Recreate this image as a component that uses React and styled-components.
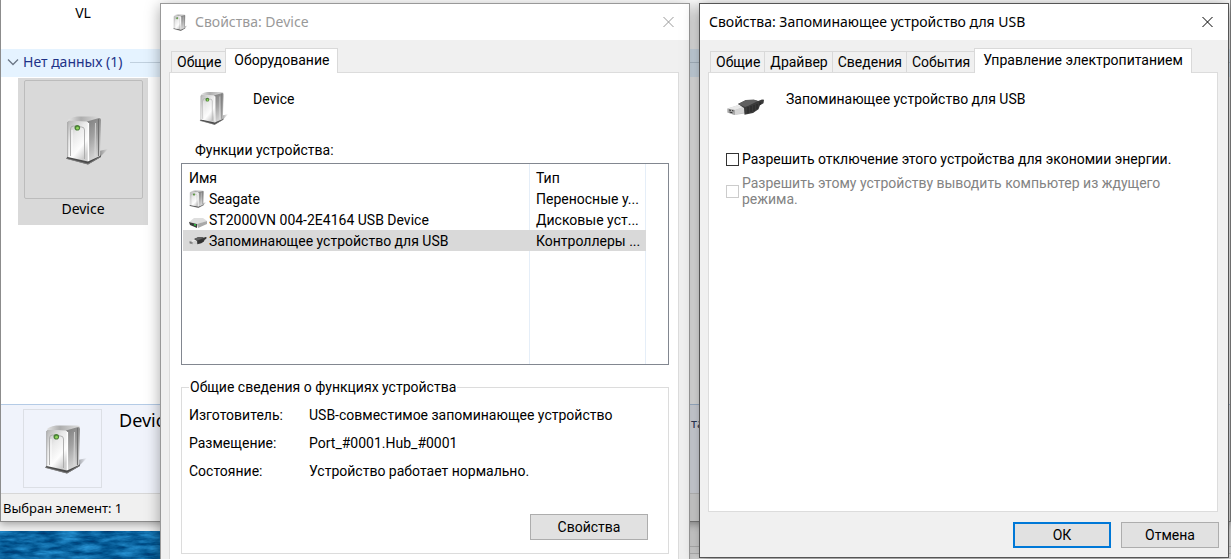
import styled, { createGlobalStyle } from 'styled-components';

const GlobalStyle = createGlobalStyle`
  *, *::before, *::after {
    box-sizing: border-box;
  }

  body {
    margin: 0;
    color: #000;
    font-family: Roboto, 'Liberation Sans', sans-serif;
    font-size: 14px;
    line-height: 16px;
  }

  button, input {
    font: inherit;
    margin: 0;
  }
`;

const Desktop = styled.main`
  position: relative;
  height: 100vh;
  overflow: hidden;
  background-color: #f0f0f0;
`;

const Wallpaper = styled.svg`
  position: absolute;
  left: 0;
  bottom: 0;
  width: 100%;
  height: 28px;
`;

const BackWindow = styled.div`
  position: absolute;
  left: 690px;
  right: 0;
  bottom: 0;
  height: 38px;
  background-color: #f0f0f0;

  &::after {
    content: '';
    display: block;
    height: 8px;
    margin-top: 25px;
    border: 1px solid #ccc;
    border-width: 1px 0;
  }
`;

const Explorer = styled.section`
  position: absolute;
  top: 0;
  right: 0;
  bottom: 37px;
  left: 0;
  display: flex;
  flex-direction: column;
  background-color: #fff;
  border: 1px solid #8c8c8c;
  border-top: 0;
  box-shadow: 0 2px 8px rgba(0, 0, 0, 0.35);
  font-family: 'Noto Sans', 'Open Sans', sans-serif;
  line-height: 20px;
`;

const PreviousItem = styled.div`
  width: 130px;
  height: 49px;
  margin-left: 17px;
  padding-top: 3px;
  text-align: center;
`;

const GroupHeader = styled.h2`
  display: flex;
  align-items: center;
  gap: 4px;
  height: 28px;
  margin: 0;
  padding: 0 0 2px 6px;
  background-color: #e5f3ff;
  color: #1e3287;
  font-size: 14px;
  font-weight: 400;

  &::after {
    content: '';
    flex: 1;
    height: 1px;
    margin-left: 4px;
    background-color: #c0d0de;
  }
`;

const FileItem = styled.div`
  display: flex;
  flex-direction: column;
  align-items: center;
  width: 130px;
  height: 147px;
  margin: 1px 0 0 17px;
  padding-top: 2px;
  background-color: #d9d9d9;
`;

const Thumbnail = styled.div`
  display: flex;
  align-items: center;
  justify-content: center;
  width: ${({ size }) => size}px;
  height: ${({ size }) => size}px;
  padding-left: 7px;
  border: 1px solid ${({ edge }) => edge};
  border-radius: ${({ round }) => (round ? '2px' : '0')};
`;

const DetailsPane = styled.div`
  display: flex;
  gap: 17px;
  height: 89px;
  margin-top: auto;
  padding: 4px 0 0 22px;
  background-color: #f0f3fb;
  border-top: 1px solid #b4cbe6;
`;

const DetailsName = styled.span`
  width: 570px;
  margin-top: 1px;
  font-size: 18px;
`;

const DetailsField = styled.span`
  margin-top: 4px;
  margin-left: -15px;
  color: #32415f;
  font-size: 13px;
`;

const StatusBar = styled.footer`
  height: 28px;
  padding: 4px 2px;
  background-color: #f0f0f0;
  border-top: 1px solid #d7d7d7;
  font-size: 13px;
`;

const Dialog = styled.section`
  position: absolute;
  top: 3px;
  display: flex;
  flex-direction: column;
  background-color: #f0f0f0;
  border: 1px solid ${({ active }) => (active ? '#555' : '#999')};
  box-shadow: 0 3px 14px rgba(0, 0, 0, ${({ active }) => (active ? 0.5 : 0.35)});
`;

const DeviceDialog = styled(Dialog)`
  left: 160px;
  width: 530px;
  height: 590px;
`;

const UsbDialog = styled(Dialog)`
  right: 2px;
  bottom: 1px;
  left: 699px;
  padding-bottom: 9px;
`;

const TitleBar = styled.header`
  display: flex;
  align-items: center;
  gap: 7px;
  height: 36px;
  padding: 0 13px 0 ${({ inset }) => inset}px;
  background-color: #fff;
  color: ${({ active }) => (active ? '#000' : '#999')};
  font-family: 'Noto Sans', 'Open Sans', sans-serif;
`;

const Title = styled.h1`
  flex: 1;
  margin: 0;
  font-size: 14px;
  font-weight: 400;
  line-height: 20px;
`;

const CloseButton = styled.button`
  display: flex;
  padding: 1px;
  border: 0;
  background: none;
  color: inherit;
`;

const TabList = styled.div`
  display: flex;
  align-items: flex-end;
  height: 32px;
  padding: 0 10px;
`;

const Tab = styled.button`
  position: relative;
  height: 21px;
  padding: 0 4px 0 5px;
  border: 1px solid #d9d9d9;
  border-bottom: 0;
  background-color: #f0f0f0;
  color: #000;
  white-space: nowrap;

  & + & {
    border-left-width: 0;
  }

  &:has(+ [aria-selected='true']) {
    border-right: 0;
  }

  &&[aria-selected='true'] {
    z-index: 1;
    height: 25px;
    margin-bottom: -1px;
    padding: 0 8px 2px;
    border-left-width: 1px;
    background-color: #fff;
  }
`;

const TabPanel = styled.div`
  flex: 1;
  margin: 0 10px ${({ gap }) => gap}px 8px;
  padding: 0 9px 9px 11px;
  border: 1px solid #dcdcdc;
  background-color: #fff;
`;

const Heading = styled.div`
  display: flex;
  gap: ${({ gap }) => gap}px;
  height: 52px;
  padding: 18px 0 0 ${({ inset }) => inset}px;
`;

const ListLabel = styled.div`
  margin: 17px 0 5px 14px;
`;

const ListBox = styled.div`
  display: grid;
  height: 202px;
  padding: 1px;
  border: 1px solid #828790;
  background:
    linear-gradient(#e5eef8, #e5eef8) 347px 0 / 1px 100% no-repeat,
    linear-gradient(#e5eef8, #e5eef8) 463px 0 / 1px 100% no-repeat;
`;

const Table = styled.table`
  width: 463px;
  align-self: start;
  border-collapse: collapse;
  table-layout: fixed;
`;

const HeadCell = styled.th`
  width: ${({ width }) => width};
  height: 23px;
  padding: 2px 6px 0;
  text-align: left;
  font-weight: 400;
`;

const Row = styled.tr`
  background-color: ${({ selected }) => (selected ? '#d9d9d9' : 'transparent')};
`;

const Cell = styled.td`
  height: 21px;
  padding: 0 0 0 6px;
  white-space: nowrap;
`;

const NameCell = styled.div`
  display: flex;
  align-items: center;
  gap: 2px;
`;

const Summary = styled.fieldset`
  height: 175px;
  margin: 14px 0 0;
  padding: 12px 20px 0 7px;
  border: 1px solid #dcdcdc;
`;

const Legend = styled.legend`
  padding: 0 1px;
`;

const Facts = styled.dl`
  display: grid;
  grid-template-columns: 120px 1fr;
  row-gap: 12px;
  margin: 0 0 35px;
`;

const Term = styled.dt``;

const Fact = styled.dd`
  margin: 0;
`;

const ButtonRow = styled.div`
  display: flex;
  justify-content: flex-end;
  gap: 10px;
  padding-right: ${({ inset }) => inset}px;
`;

const Button = styled.button`
  width: ${({ wide }) => (wide ? 118 : 98)}px;
  height: 26px;
  padding: 0;
  border: ${({ primary }) => (primary ? '2px solid #0078d7' : '1px solid #adadad')};
  background-color: #e1e1e1;
  color: #000;
`;

const Option = styled.label`
  display: flex;
  align-items: center;
  gap: 3px;
  width: 450px;
  margin: ${({ top }) => top}px 0 0 6px;
  color: ${({ disabled }) => (disabled ? '#838383' : '#000')};
`;

const CheckBox = styled.input`
  flex: none;
  width: 13px;
  height: 13px;
  appearance: none;
  border: 1px solid #333;
  background-color: #fff;

  &:disabled {
    border-color: #ccc;
  }
`;

const Icon = styled.svg`
  display: block;
  flex: none;
`;

const CloseIcon = () => (
  <Icon width='13' height='13' viewBox='0 0 13 13' fill='none' stroke='currentColor'>
    <path d='M1.5 1l10 10M11.5 1l-10 10' />
  </Icon>
);

const ChevronIcon = () => (
  <Icon width='12' height='12' viewBox='0 0 12 12' fill='none' stroke='#6b7686'>
    <path d='M1 3.5l5 5 5-5' strokeWidth='1.3' />
  </Icon>
);

// Upright enclosure with a lit power button
const DriveIcon = ({ width, height, id }) => (
  <Icon width={width} height={height} viewBox='0 0 44 50' preserveAspectRatio='none'>
    <defs>
      <linearGradient id={`${id}-front`} x1='0' y1='0' x2='0.6' y2='1'>
        <stop offset='0' stopColor='#b4b4b4' />
        <stop offset='0.4' stopColor='#e9e9e9' />
        <stop offset='0.75' stopColor='#fdfdfd' />
        <stop offset='1' stopColor='#cfcfcf' />
      </linearGradient>
      <linearGradient id={`${id}-side`} x1='0' y1='0' x2='0.3' y2='1'>
        <stop offset='0' stopColor='#7c7c7c' />
        <stop offset='0.5' stopColor='#a2a2a2' />
        <stop offset='1' stopColor='#d6d6d6' />
      </linearGradient>
      <linearGradient id={`${id}-top`} x1='0' y1='0' x2='1' y2='0'>
        <stop offset='0' stopColor='#e6e6e6' />
        <stop offset='0.4' stopColor='#adadad' />
        <stop offset='1' stopColor='#e0e0e0' />
      </linearGradient>
      <linearGradient id={`${id}-shade`} x1='0' y1='0' x2='1' y2='0'>
        <stop offset='0' stopColor='#000' stopOpacity='0.35' />
        <stop offset='1' stopColor='#000' stopOpacity='0' />
      </linearGradient>
    </defs>
    <path d='M34 43V36l9-2-7 7z' fill={`url(#${id}-shade)`} />
    <path d='M1 43.500l2-2 20 3 12-5 1 2.500-13 7.500z' fill='#4a4a4a' />
    <path d='M1.500 43.500l21.500 5.500 12-7' fill='none' stroke='#858585' strokeWidth='0.8' />
    <path d='M2.700 5.500Q4 3 12 1.500h21q3 0 3 2l-12 4z' fill={`url(#${id}-top)`} />
    <path d='M22 6.500L34 3q2 0 2 2l-1 36-12 5.500z' fill={`url(#${id}-side)`} />
    <path d='M33.500 4v37' stroke='#707070' strokeWidth='1.200' />
    <path d='M30.500 8l-.5 33' stroke='#ddd' strokeWidth='0.8' />
    <path d='M2.700 7q0-1.500 2-1.300L21 6.500q2.500 0 2.500 2L23 46.500 2.700 42z' fill={`url(#${id}-front)`} />
    <path d='M2.700 7v35' stroke='#9a9a9a' strokeWidth='0.8' />
    <path d='M5.500 41V14q0-3 3-3l8 1q3 0 3 3v29' fill='none' stroke='#a8a8a8' strokeWidth='0.9' />
    <path d='M7 41V15' stroke='#fff' strokeWidth='0.9' />
    <path d='M23.400 8v38' stroke='#fff' strokeWidth='1.400' />
    <circle cx='12.300' cy='12.700' r='2.800' fill='#4b7f39' />
    <circle cx='12.500' cy='13.200' r='1.400' fill='#8fd75a' />
  </Icon>
);

const DiskIcon = () => (
  <Icon width='18' height='18' viewBox='0 0 18 18'>
    <path d='M0 11l5-4h9l4 3-9 3z' fill='#dedede' />
    <path d='M0 11l8 2v4l-7-3z' fill='#3c3c3c' />
    <path d='M8 13l10-3v3l-9 4z' fill='#a9a9a9' />
    <path d='M5 13.500l2 .7' stroke='#35c145' strokeWidth='1.500' />
  </Icon>
);

const UsbIcon = ({ width, height }) => (
  <Icon width={width} height={height} viewBox='0 0 38 18'>
    <path d='M.5 9.500L10 6.500l8 1.500v6.500L7 16l-6.500-2.500z' fill='#c4c4c4' />
    <path d='M.5 9.500L10 6.500l7 1.500-9 3z' fill='#e9e9e9' />
    <path d='M8 11l9-3v5.500L8 16z' fill='#d4d4d4' />
    <path d='M.5 9.500L8 11v5l-7.500-2.500z' fill='#a8a8a8' />
    <path d='M2 11l2 .4M5 11.500l1.500.4M2.500 13l3 .8' stroke='#333' />
    <path d='M11 5l8-4 8-.2 4 1.200 4-1.500 2 .2-.5 3.500-3.500 2-1.500 4L26 14l-8.500 1.800L17 9z' fill='#3a3a3a' />
    <path d='M11 5l8-4 8-.2 4 1.200-9 4.500-4 1.500z' fill='#5f5f5f' />
    <path d='M21 8v6M24 7v6M27 6v6M30 5v5M33 3v3' stroke='#222' strokeWidth='0.8' />
  </Icon>
);

const devices = [
  { name: 'Seagate', type: 'Переносные у...', icon: <DriveIcon id='row' width={18} height={18} /> },
  { name: 'ST2000VN 004-2E4164 USB Device', type: 'Дисковые уст...', icon: <DiskIcon /> },
  {
    name: 'Запоминающее устройство для USB',
    type: 'Контроллеры ...',
    icon: <UsbIcon width={18} height={10} />,
    selected: true,
  },
];

const facts = [
  ['Изготовитель:', 'USB-совместимое запоминающее устройство'],
  ['Размещение:', 'Port_#0001.Hub_#0001'],
  ['Состояние:', 'Устройство работает нормально.'],
];

const Tabs = ({ names, current }) => (
  <TabList role='tablist'>
    {names.map((name) => (
      <Tab key={name} role='tab' aria-selected={name === current}>
        {name}
      </Tab>
    ))}
  </TabList>
);

const DeviceProperties = () => (
  <DeviceDialog>
    <TitleBar inset={12}>
      <DriveIcon id='title' width={15} height={17} />
      <Title>Свойства: Device</Title>
      <CloseButton aria-label='Закрыть'>
        <CloseIcon />
      </CloseButton>
    </TitleBar>
    <Tabs names={['Общие', 'Оборудование']} current='Оборудование' />
    <TabPanel gap={28}>
      <Heading inset={18} gap={24}>
        <DriveIcon id='heading' width={30} height={34} />
        Device
      </Heading>
      <ListLabel>Функции устройства:</ListLabel>
      <ListBox>
        <Table>
          <thead>
            <tr>
              <HeadCell width='auto'>Имя</HeadCell>
              <HeadCell width='116px'>Тип</HeadCell>
            </tr>
          </thead>
          <tbody>
            {devices.map(({ name, type, icon, selected }) => (
              <Row key={name} selected={selected}>
                <Cell>
                  <NameCell>
                    {icon}
                    {name}
                  </NameCell>
                </Cell>
                <Cell>{type}</Cell>
              </Row>
            ))}
          </tbody>
        </Table>
      </ListBox>
      <Summary>
        <Legend>Общие сведения о функциях устройства</Legend>
        <Facts>
          {facts.map(([term, fact]) => [
            <Term key={term}>{term}</Term>,
            <Fact key={fact}>{fact}</Fact>,
          ])}
        </Facts>
        <ButtonRow inset={0}>
          <Button wide>Свойства</Button>
        </ButtonRow>
      </Summary>
    </TabPanel>
  </DeviceDialog>
);

const UsbProperties = () => (
  <UsbDialog active>
    <TitleBar active inset={9}>
      <Title>Свойства: Запоминающее устройство для USB</Title>
      <CloseButton aria-label='Закрыть'>
        <CloseIcon />
      </CloseButton>
    </TitleBar>
    <Tabs
      names={['Общие', 'Драйвер', 'Сведения', 'События', 'Управление электропитанием']}
      current='Управление электропитанием'
    />
    <TabPanel gap={10}>
      <Heading inset={7} gap={21}>
        <UsbIcon width={38} height={34} />
        Запоминающее устройство для USB
      </Heading>
      <Option top={26}>
        <CheckBox type='checkbox' />
        Разрешить отключение этого устройства для экономии энергии.
      </Option>
      <Option top={8} disabled>
        <CheckBox type='checkbox' disabled />
        Разрешить этому устройству выводить компьютер из ждущего режима.
      </Option>
    </TabPanel>
    <ButtonRow inset={9}>
      <Button primary>ОК</Button>
      <Button>Отмена</Button>
    </ButtonRow>
  </UsbDialog>
);

const App = () => (
  <>
    <GlobalStyle />
    <Desktop>
      <Wallpaper preserveAspectRatio='none' viewBox='0 0 1231 28'>
        <filter id='waves' x='0' y='0' width='1' height='1' colorInterpolationFilters='sRGB'>
          <feTurbulence type='fractalNoise' baseFrequency='0.05 0.2' numOctaves='4' seed='4' />
          <feColorMatrix values='0.3 0 0 0 -0.1  0.5 0 0 0 0.15  0.55 0 0 0 0.36  0 0 0 0 1' />
        </filter>
        <rect width='1231' height='28' filter='url(#waves)' />
      </Wallpaper>
      <BackWindow />
      <Explorer>
        <PreviousItem>VL</PreviousItem>
        <GroupHeader>
          <ChevronIcon />
          Нет данных (1)
        </GroupHeader>
        <FileItem>
          <Thumbnail size={119} edge='#bcbcbc' round>
            <DriveIcon id='file' width={44} height={50} />
          </Thumbnail>
          Device
        </FileItem>
        <DetailsPane>
          <Thumbnail size={79} edge='#dcdfe5'>
            <DriveIcon id='details' width={44} height={50} />
          </Thumbnail>
          <DetailsName>Device</DetailsName>
          <DetailsField>та</DetailsField>
        </DetailsPane>
        <StatusBar>Выбран элемент: 1</StatusBar>
      </Explorer>
      <DeviceProperties />
      <UsbProperties />
    </Desktop>
  </>
);

export default App;
